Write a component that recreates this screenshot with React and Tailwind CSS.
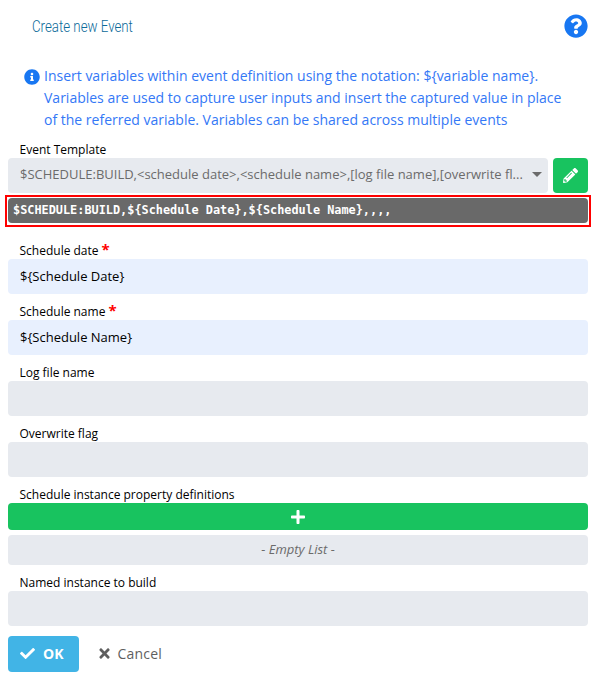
import React from "react";
import { FaCheck, FaInfoCircle, FaPencilAlt, FaPlus, FaQuestionCircle, FaTimes } from "react-icons/fa";

function Label({ children, required, className }) {
  return (
    <div className={`flex h-[18px] items-center pl-[11.5px] text-[12px] leading-[18px] text-black ${className ?? ""}`}>
      <span className="mt-[2px]">{children}</span>
      {required && <span className="-mt-[3px] ml-[3px] text-[15px] font-bold leading-[18px] text-[#f00]">*</span>}
    </div>
  );
}

function Field({ label, value, required }) {
  return (
    <div className="pt-2">
      <Label required={required}>{label}</Label>
      <div
        className={`flex h-[35px] items-center rounded pl-3 text-[13px] text-black ${
          value ? "bg-[#e8f0fe]" : "bg-[#e7eaef]"
        }`}
      >
        {value}
      </div>
    </div>
  );
}

export default function App() {
  return (
    <main className="h-[681px] w-[597px] overflow-hidden bg-white pl-2 pr-[9px] font-['Open_Sans','Noto_Sans',sans-serif]">
      <header className="flex h-[66px] items-start justify-between pt-3.5">
        <h1 className="ml-6 mt-[2px] origin-left scale-x-[0.83] whitespace-nowrap font-['Roboto',sans-serif] text-[16px] font-light leading-[22px] text-[#0b6a99]">
          Create new Event
        </h1>
        <FaQuestionCircle size={24} color="#1877f2" />
      </header>

      <section className="flex h-[76px] pl-4">
        <FaInfoCircle size={16} color="#1877f2" className="mt-[3px] shrink-0" />
        <p className="-mt-px ml-1 whitespace-nowrap text-[14px] leading-[22px] text-[#3478f6]">
          Insert variables within event definition using the notation: {"${variable name}."}
          <br />
          Variables are used to capture user inputs and insert the captured value in place
          <br />
          of the referred variable. Variables can be shared across multiple events
        </p>
      </section>

      <Label className="-mt-[2px]">Event Template</Label>
      <div className="flex gap-[5px]">
        <div className="flex h-[35px] w-[540px] items-center justify-between rounded bg-[#e7eaef] pl-3 pr-[6px] text-[13px] text-[#6b6b6b]">
          <span className="-mt-[2px] whitespace-nowrap">
            {"$SCHEDULE:BUILD,<schedule date>,<schedule name>,[log file name],[overwrite fl..."}
          </span>
          <svg width="10" height="5" viewBox="0 0 10 5" className="-mt-[2px]">
            <path d="M0 0h10L5 5z" fill="#6b6b6b" />
          </svg>
        </div>
        <button className="flex size-[35px] items-center justify-center rounded bg-[#18c35f]">
          <FaPencilAlt size={15} color="#fff" />
        </button>
      </div>

      <div className="-ml-[3px] mt-[2px] h-8 w-[586px] border-2 border-[#f00] p-px">
        <code className="flex h-[25px] items-center whitespace-pre rounded bg-[#696969] pl-[5px] font-['DejaVu_Sans_Mono',monospace] text-[11.87px] font-bold text-white">
          {"$SCHEDULE:BUILD,${Schedule Date},${Schedule Name},,,,"}
        </code>
      </div>

      <div className="pt-[6px]">
        <Field label="Schedule date" value={"${Schedule Date}"} required />
        <Field label="Schedule name" value={"${Schedule Name}"} required />
        <Field label="Log file name" />
        <Field label="Overwrite flag" />
        <Label className="mt-2">Schedule instance property definitions</Label>
        <button className="flex h-[27px] w-full items-center justify-center rounded bg-[#18c35f]">
          <FaPlus size={16} color="#fff" />
        </button>
        <div className="mt-[5px] flex h-[30px] items-center justify-center rounded bg-[#e7eaef] pb-px text-[13px] italic text-[#6b6b6b]">
          - Empty List -
        </div>
        <Field label="Named instance to build" />
      </div>

      <footer className="mt-2.5 flex h-9 items-center text-[14px]">
        <button className="flex h-9 w-[71px] items-center rounded bg-[#41b4e6] pb-px pl-3 font-bold text-white">
          <FaCheck size={15} />
          <span className="ml-2">OK</span>
        </button>
        <button className="ml-[18px] flex items-center pb-px font-medium text-[#5f5f5f]">
          <FaTimes size={15} />
          <span className="ml-[5.5px] tracking-[0.2px]">Cancel</span>
        </button>
      </footer>
    </main>
  );
}
